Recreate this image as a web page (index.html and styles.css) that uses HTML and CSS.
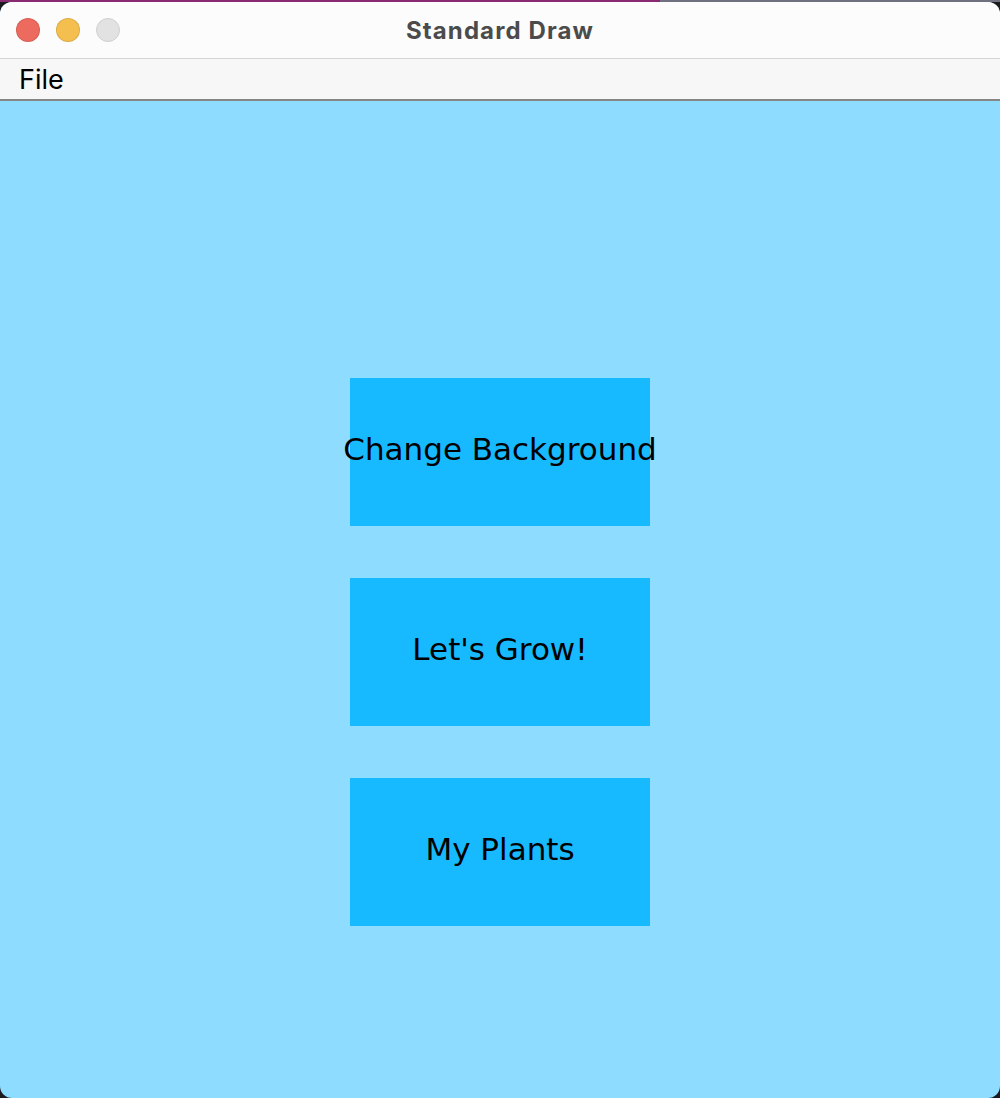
FILE: index.html
```
<!DOCTYPE html>
<html lang="en">
<head>
  <meta charset="UTF-8" />
  <meta name="viewport" content="width=device-width, initial-scale=1.0"/>
  <title>Standard Draw</title>
  <link rel="stylesheet" href="styles.css">
</head>
<body>

  <div class="window">
    <div class="titlebar">
      <div class="lights">
        <span class="light close"></span>
        <span class="light min"></span>
        <span class="light max"></span>
      </div>
      <div class="title">Standard Draw</div>
    </div>

    <div class="menubar">
      <span class="menu">File</span>
    </div>

    <div class="canvas">
      <div class="btn">Change Background</div>
      <div class="btn">Let's Grow!</div>
      <div class="btn">My Plants</div>
    </div>
  </div>

</body>
</html>
```

FILE: styles.css
```
html, body {
  margin: 0;
  height: 100%;
}

body {
  background:
    linear-gradient(to right, #8a2b72 0, #8a2b72 660px, #6f7180 660px) top / 100% 2px no-repeat,
    #1b1b1d;
  padding-top: 2px;
  box-sizing: border-box;
}

.window {
  height: 1096px;
  display: flex;
  flex-direction: column;
  border-radius: 12px;
  overflow: hidden;
  background-color: #8edcff;
}

.titlebar {
  position: relative;
  height: 56px;
  background-color: #fcfcfc;
  border-bottom: 1px solid #d4d4d4;
  display: flex;
  align-items: center;
  justify-content: center;
}

.lights {
  position: absolute;
  left: 16px;
  top: 16px;
  display: flex;
  gap: 16px;
}

.light {
  box-sizing: border-box;
  width: 24px;
  height: 24px;
  border-radius: 50%;
  border: 1px solid rgba(0, 0, 0, 0.1);
}

.close { background-color: #ed6a5e; }
.min { background-color: #f5bf4f; }
.max { background-color: #e2e2e2; border-color: #d0d0d0; }

.title {
  font-family: Inter, "Liberation Sans", sans-serif;
  font-weight: 700;
  font-size: 24px;
  letter-spacing: 1.1px;
  color: #4b4b4b;
}

.menubar {
  height: 40px;
  background-color: #f7f7f7;
  border-bottom: 2px solid #858585;
  display: flex;
  align-items: center;
  padding-left: 19px;
}

.menu {
  font-family: Inter, "Liberation Sans", sans-serif;
  font-size: 27px;
  color: #000;
}

.canvas {
  flex: 1;
  display: flex;
  flex-direction: column;
  align-items: center;
  gap: 52px;
  padding-top: 277px;
}

.btn {
  box-sizing: border-box;
  width: 300px;
  height: 148px;
  padding-bottom: 6px;
  background-color: #17b9ff;
  display: flex;
  align-items: center;
  justify-content: center;
  white-space: nowrap;
  font-family: "DejaVu Sans", sans-serif;
  font-size: 31px;
  color: #000;
}
```
